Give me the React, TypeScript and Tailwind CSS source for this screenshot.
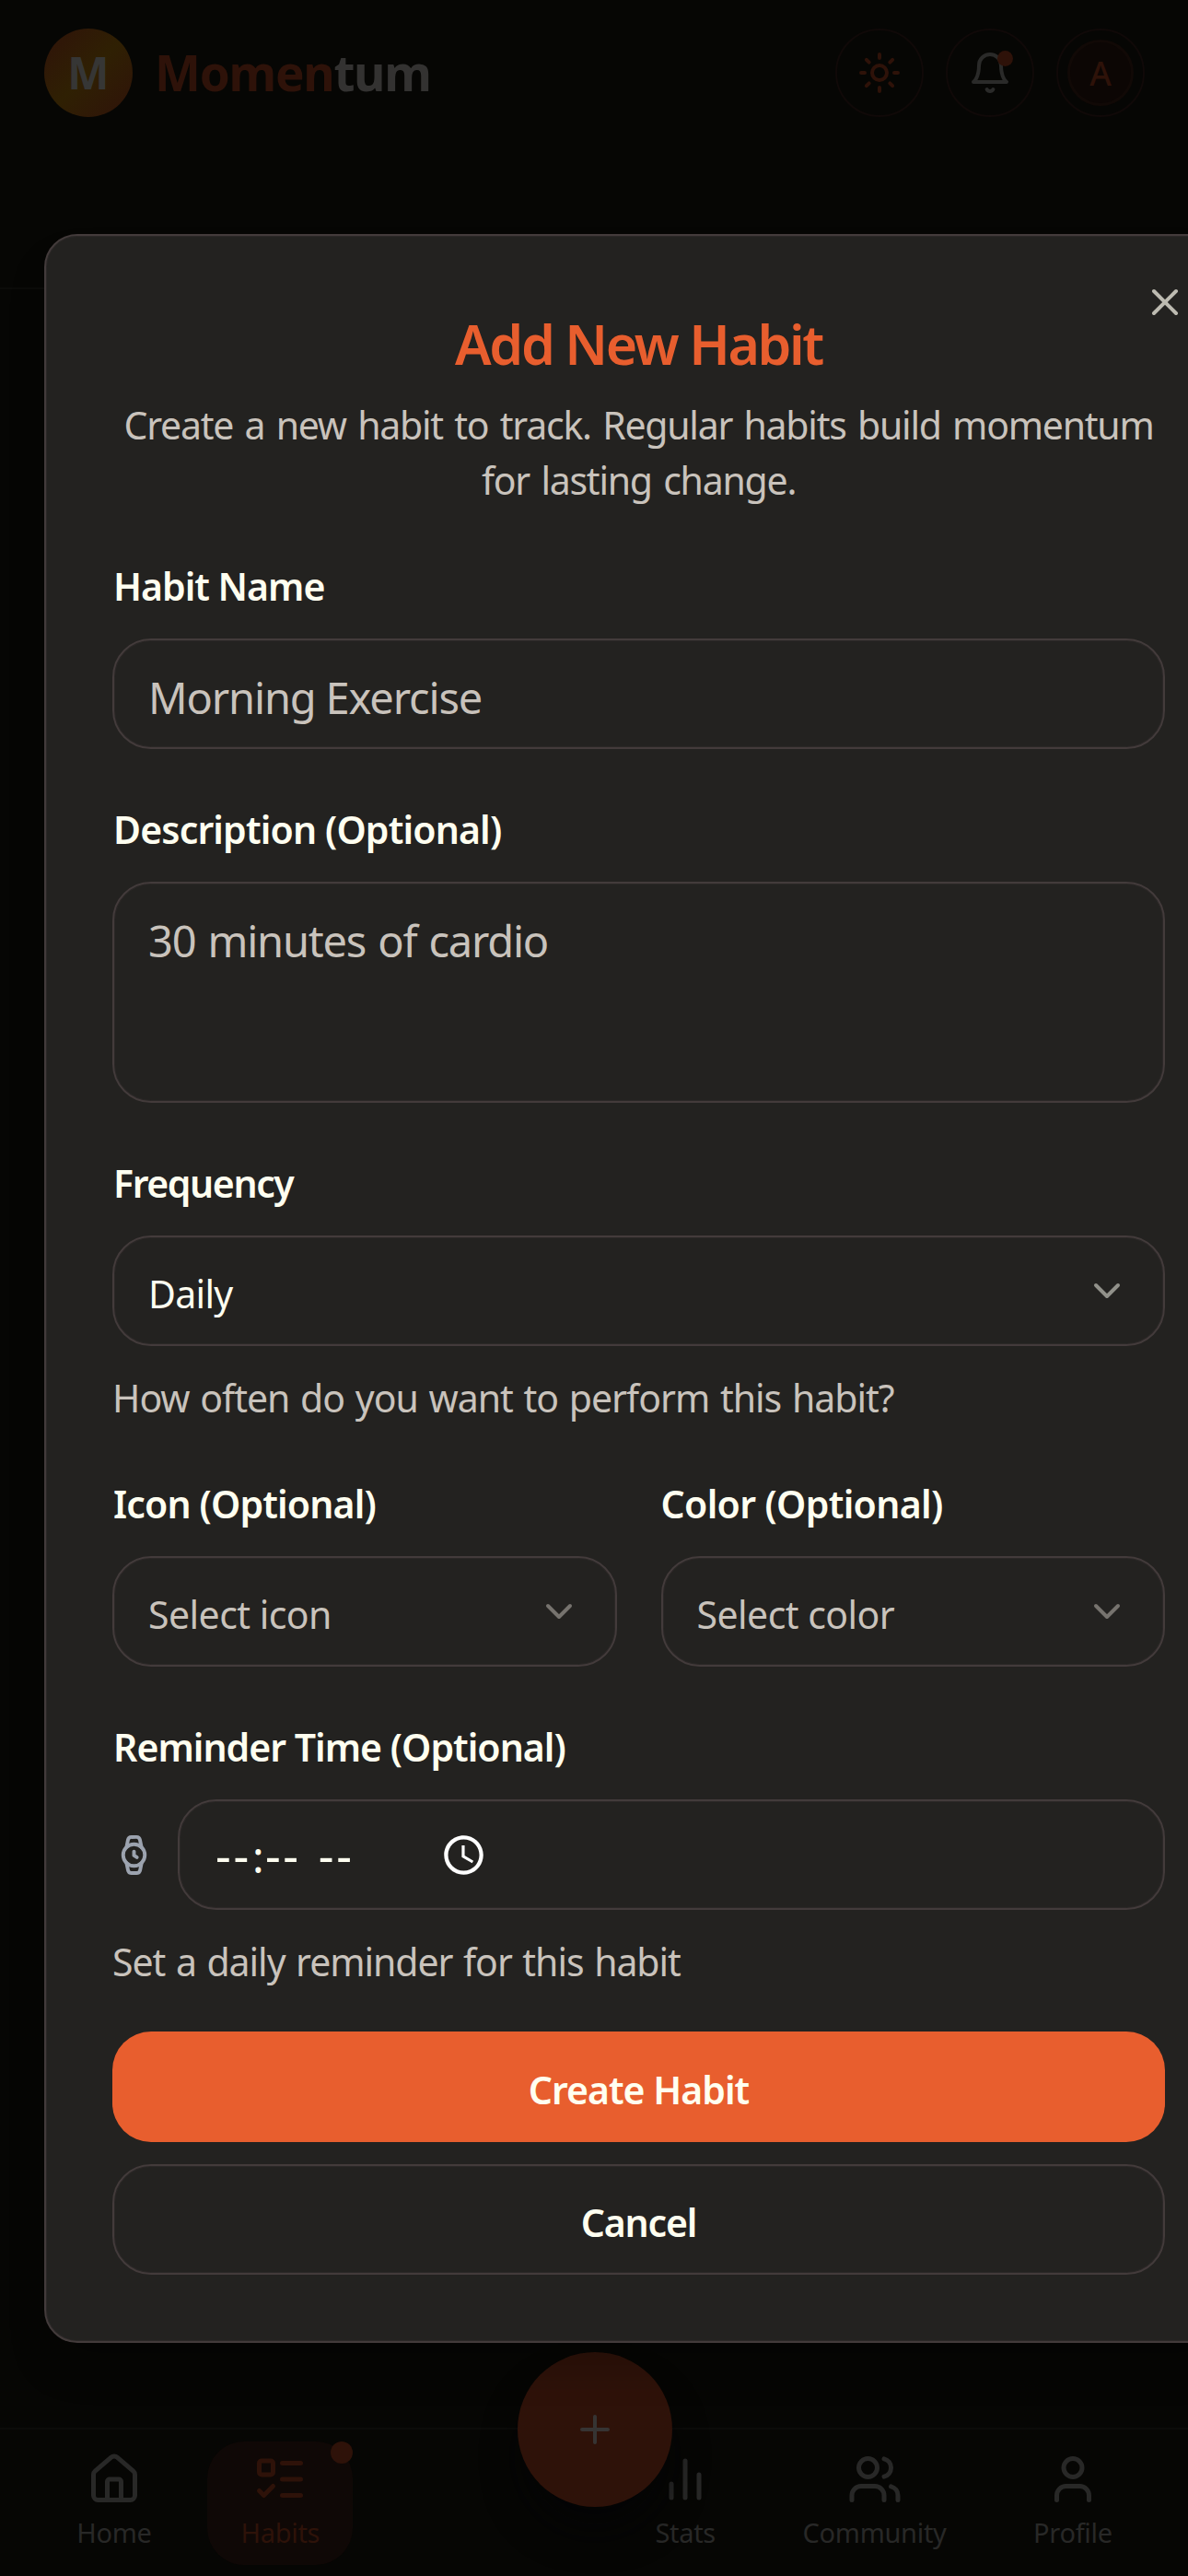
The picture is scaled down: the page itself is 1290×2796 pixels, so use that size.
import type { ReactNode } from 'react';
import { ChevronDown, House, ListTodo, Plus, Sun, User, Watch, X } from 'lucide-react';

function Label({ children, className = '' }: { children: ReactNode; className?: string }) {
  return (
    <div className={`pl-px whitespace-nowrap text-[41px] leading-[42px] font-semibold text-[#fffff0] ${className}`}>{children}</div>
  );
}

function Hint({ children, className }: { children: ReactNode; className: string }) {
  return (
    <p className={`mt-[26px] text-[41px] leading-[60px] [word-spacing:2px] whitespace-nowrap text-[#c9c3bc] ${className}`}>
      {children}
    </p>
  );
}

function Select({ value, textClass, iconClass }: { value: string; textClass: string; iconClass: string }) {
  return (
    <div className="mt-9 flex h-[120px] items-center justify-between rounded-[42px] border-2 border-[#433b3b] px-[37px] shadow-[inset_0_0_0_1px_#2b2827]">
      <span className={`pt-1.5 text-[41px] leading-[60px] ${textClass}`}>{value}</span>
      <ChevronDown className={`size-12 ${iconClass}`} strokeWidth={2} />
    </div>
  );
}

function Bell() {
  return (
    <svg className="size-12" viewBox="0 0 24 24" fill="none" stroke="currentColor" strokeWidth="2" strokeLinecap="round" strokeLinejoin="round">
      <path d="M6 8a6 6 0 0 1 12 0c0 7 3 9 3 9H3s3-2 3-9" />
      <path d="M10.3 21a1.94 1.94 0 0 0 3.4 0" />
    </svg>
  );
}

function BarsIcon() {
  return (
    <svg className="size-[60px]" viewBox="0 0 24 24" fill="none" stroke="currentColor" strokeWidth="2" strokeLinecap="round">
      <path d="M18 20V10M12 20V4M6 20v-6" />
    </svg>
  );
}

function UsersIcon() {
  return (
    <svg className="size-[60px]" viewBox="0 0 24 24" fill="none" stroke="currentColor" strokeWidth="2" strokeLinecap="round" strokeLinejoin="round">
      <path d="M16 21v-2a4 4 0 0 0-4-4H6a4 4 0 0 0-4 4v2" />
      <circle cx="9" cy="7" r="4" />
      <path d="M22 21v-2a4 4 0 0 0-3-3.87" />
      <path d="M16 3.13a4 4 0 0 1 0 7.75" />
    </svg>
  );
}

function ClockIcon() {
  return (
    <svg className="size-[51px]" viewBox="0 0 24 24" fill="#ffffff">
      <path d="M11.99 2C6.47 2 2 6.48 2 12s4.47 10 9.99 10C17.52 22 22 17.52 22 12S17.52 2 11.99 2zM12 20c-4.42 0-8-3.58-8-8s3.58-8 8-8 8 3.58 8 8-3.58 8-8 8z" />
      <path d="M12.5 7H11v6l5.25 3.15.75-1.23-4.5-2.67z" />
    </svg>
  );
}

function NavItem({ label, icon, className }: { label: string; icon: ReactNode; className: string }) {
  return (
    <div className={`relative flex h-[134px] flex-col items-center rounded-[40px] pt-[11px] ${className}`}>
      {icon}
      <span className="mt-[10px] text-[29px] leading-[36px] tracking-[-0.3px]">{label}</span>
    </div>
  );
}

function Header() {
  return (
    <header className="flex h-[314px] items-start justify-between border-b-2 border-[#0b0b09] pt-[31px] pr-[47px] pl-12">
      <div className="flex items-center">
        <div className="flex size-24 items-center justify-center rounded-full bg-linear-135 from-[#2f1209] via-[#2f2003] to-[#2f1209] text-[48px] leading-none font-bold text-[#363635]">
          <span>M</span>
        </div>
        <div className="ml-6 text-[53px] leading-[72px] font-bold tracking-[-1.3px] text-[#333231]">
          <span className="text-[#2e1209]">Momen</span>tum
        </div>
      </div>
      <div className="flex gap-6">
        <div className="flex size-24 items-center justify-center rounded-full border-2 border-[#100908] text-[#2e1209]">
          <Sun className="size-12" />
        </div>
        <div className="relative flex size-24 items-center justify-center rounded-full border-2 border-[#100908] text-[#2a2a29]">
          <Bell />
          <span className="absolute top-[22px] right-[21px] size-[17px] rounded-full bg-[#2e1209]" />
        </div>
        <div className="flex size-24 items-center justify-center rounded-full border-2 border-[#100908]">
          <div className="flex size-[72px] items-center justify-center rounded-full border-3 border-[#110906] bg-[#0c0604] pt-0.5 text-[36px] leading-none font-medium text-[#2e1209]">
            A
          </div>
        </div>
      </div>
    </header>
  );
}

function BottomNav() {
  return (
    <nav className="relative flex h-[161px] items-start justify-between border-t-2 border-[#0b0b09] px-12 pt-[13px] text-[#282827]">
      <NavItem label="Home" className="w-[152px]" icon={<House className="size-[60px]" />} />
      <NavItem
        label="Habits"
        className="w-[158px] bg-[#0f0806] text-[#2e1209]"
        icon={
          <>
            <ListTodo className="size-[60px]" />
            <span className="absolute top-0 right-0 size-6 rounded-full bg-[#2e1209]" />
          </>
        }
      />
      <div className="w-[243px]" />
      <NavItem label="Stats" className="w-[134px]" icon={<BarsIcon />} />
      <NavItem label="Community" className="w-[226px]" icon={<UsersIcon />} />
      <NavItem label="Profile" className="w-[154px]" icon={<User className="size-[60px]" />} />
      <div className="absolute -top-[84px] left-[562px] flex size-[168px] items-center justify-center rounded-full bg-[#2e1209] text-[#363433] shadow-[0_30px_45px_-9px_#040405]">
        <Plus className="size-12" />
      </div>
    </nav>
  );
}

function HabitDialog() {
  return (
    <div
      role="dialog"
      className="absolute top-[254px] left-12 flex h-[2289px] w-[1291px] flex-col rounded-[36px] border-2 border-[#433b3b] bg-[#232220] px-[72px] pt-[87px] shadow-[0_30px_45px_-9px_#04040540,inset_0_0_0_1px_#2b2827]"
    >
      <X className="absolute top-[48px] left-[1191px] size-12 text-[#bdbbb1]" />
      <h2 className="text-center text-[59px] leading-[60px] font-semibold tracking-[-2.4px] text-[#e85e2e]">Add New Habit</h2>
      <p className="mt-[28px] text-center text-[41px] leading-[60px] tracking-[-1.25px] [word-spacing:3px] whitespace-nowrap text-[#c9c3bc]">
        Create a new habit to track. Regular habits build momentum
        <br />
        for lasting change.
      </p>

      <Label className="mt-16 tracking-[-1px]">Habit Name</Label>
      <div className="mt-9 flex h-[120px] items-center rounded-[42px] border-2 border-[#433b3b] px-[37px] pt-[9px] text-[47px] tracking-[-1.15px] text-[#c9c3bc] shadow-[inset_0_0_0_1px_#2b2827]">
        Morning Exercise
      </div>

      <Label className="mt-[66px] tracking-[-0.85px]">Description (Optional)</Label>
      <div className="mt-9 h-60 rounded-[42px] border-2 border-[#433b3b] px-[37px] pt-[26px] text-[47px] leading-[72px] tracking-[-1.2px] [word-spacing:2px] text-[#c9c3bc] shadow-[inset_0_0_0_1px_#2b2827]">
        30 minutes of cardio
      </div>

      <Label className="mt-[66px] tracking-[-1.4px]">Frequency</Label>
      <Select value="Daily" textClass="text-[#fffff0] tracking-[-0.7px]" iconClass="text-[#91918a]" />
      <Hint className="tracking-[-1px]">How often do you want to perform this habit?</Hint>

      <div className="mt-16 grid grid-cols-2 gap-12">
        <div>
          <Label className="tracking-[-0.85px]">Icon (Optional)</Label>
          <Select value="Select icon" textClass="text-[#c9c3bc] tracking-[-0.55px]" iconClass="text-[#76736e]" />
        </div>
        <div>
          <Label className="-ml-px tracking-[-0.65px]">Color (Optional)</Label>
          <Select value="Select color" textClass="text-[#c9c3bc] tracking-[-0.55px]" iconClass="text-[#76736e]" />
        </div>
      </div>

      <Label className="mt-[66px] tracking-[-0.98px]">Reminder Time (Optional)</Label>
      <div className="mt-9 flex items-center gap-6">
        <Watch className="size-[47px] text-[#9ca3af]" />
        <div className="flex h-[120px] flex-1 items-center rounded-[42px] border-2 border-[#433b3b] pl-[39px] text-[#fffff0] shadow-[inset_0_0_0_1px_#2b2827]">
          <div className="flex w-[244px] items-center text-[52px] leading-[72px] tracking-[2.7px]">
            <span>--</span>
            <span className="w-[15px] pt-1 text-center text-[47px] tracking-normal">:</span>
            <span>--</span>
            <span className="ml-[19px]">--</span>
          </div>
          <ClockIcon />
        </div>
      </div>
      <Hint className="tracking-[-1.05px]">Set a daily reminder for this habit</Hint>

      <button className="mt-[46px] h-[120px] rounded-[42px] bg-[#e85e2e] pt-2 text-[41px] font-semibold tracking-[-1px] text-[#fffff0]">
        Create Habit
      </button>
      <button className="mt-6 h-[120px] rounded-[42px] border-2 border-[#433b3b] pt-2 text-[41px] font-semibold tracking-[-1.2px] text-[#fffff0] shadow-[inset_0_0_0_1px_#2b2827]">
        Cancel
      </button>
    </div>
  );
}

export default function App() {
  return (
    <div className="relative flex h-[2796px] w-full flex-col overflow-hidden bg-[#060604] font-['Noto_Sans',sans-serif]">
      <Header />
      <main className="flex-1" />
      <BottomNav />
      <HabitDialog />
    </div>
  );
}
